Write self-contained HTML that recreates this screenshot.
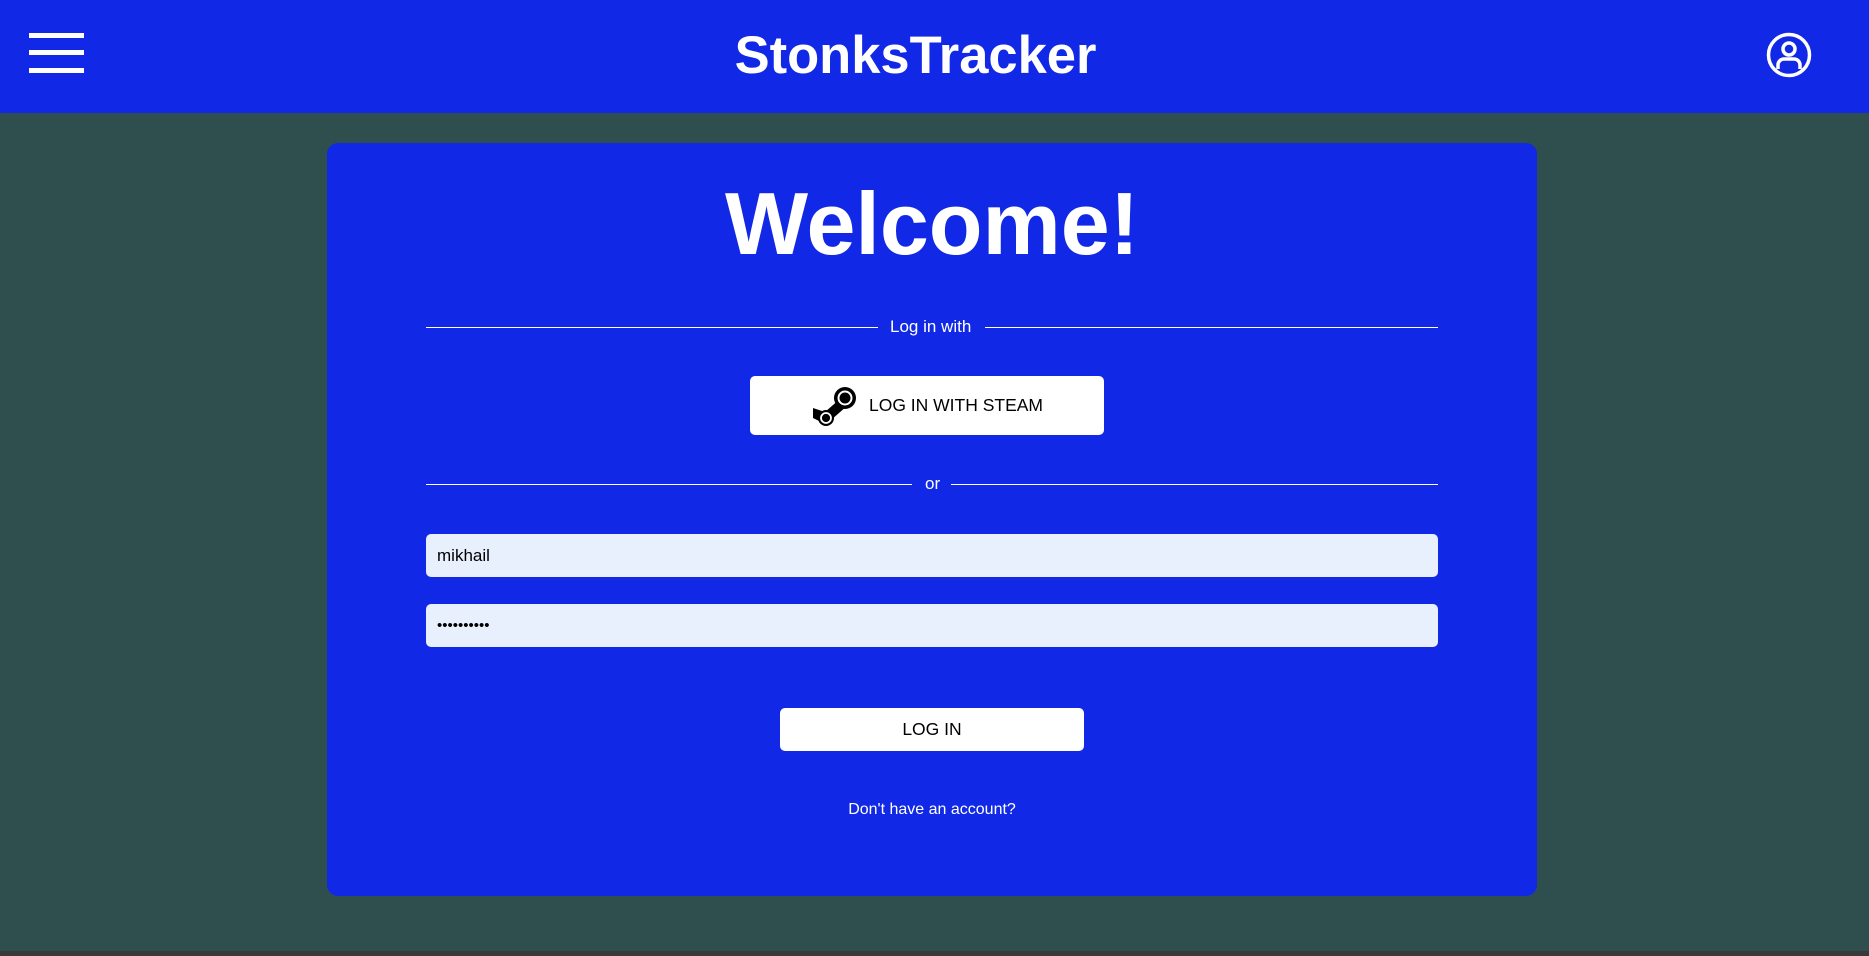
<!DOCTYPE html>
<html><head><style>
*{margin:0;padding:0;box-sizing:border-box}
body{width:1869px;height:956px;background:#2f4f4f;font-family:"Liberation Sans",Arial,sans-serif;position:relative;overflow:hidden}
.hdr{position:absolute;left:0;top:0;width:1869px;height:113px;background:#1129e6}
.bar{position:absolute;left:29px;width:55px;height:5px;background:#fff}
.title{position:absolute;left:-19px;width:1869px;top:24px;text-align:center;color:#fff;font-weight:bold;font-size:52.5px;line-height:64px}
.card{position:absolute;left:327px;top:143px;width:1210px;height:753px;background:#1129e6;border-radius:11px}
.abs{position:absolute}
.welcome{width:1210px;top:172px;text-align:center;color:#fff;font-weight:bold;font-size:88px;line-height:104px}
.line{position:absolute;height:1px;background:#fff}
.lbl{position:absolute;color:#fff;font-size:17px;line-height:20px}
.btn{position:absolute;background:#fff;border-radius:5px;color:#000;font-size:17.5px;display:flex;align-items:center;justify-content:center}
.inp{position:absolute;left:426px;width:1012px;background:#e8f0fe;border-radius:5px;font-size:17px;padding-left:11px;display:flex;align-items:center;color:#000}
</style></head><body>
<div class="hdr">
<div class="bar" style="top:33px"></div>
<div class="bar" style="top:50px"></div>
<div class="bar" style="top:68px"></div>
<div class="title">StonksTracker</div>
<svg class="abs" style="left:1765px;top:31px" width="48" height="48" viewBox="0 0 48 48" fill="none" stroke="#fff" stroke-width="3.5"><circle cx="24" cy="24" r="20.5"/><circle cx="24" cy="18" r="6"/><path d="M13 38 v-4 a6 6 0 0 1 6 -6 h10 a6 6 0 0 1 6 6 v4"/></svg>
</div>
<div class="card"></div>
<div class="abs welcome" style="left:327px">Welcome!</div>
<div class="line" style="left:426px;width:452px;top:327px"></div>
<div class="lbl" style="left:890px;top:317px">Log in with</div>
<div class="line" style="left:985px;width:453px;top:327px"></div>
<div class="btn" style="left:750px;top:376px;width:354px;height:59px">
<svg width="48" height="40" viewBox="0 0 48 40" style="margin-right:10px"><path d="M2 22 L14 26 L30 12 L36 20 L20 34 L14 38 L2 32 Z" fill="#000"/><circle cx="34" cy="12" r="11" fill="#000"/><circle cx="34" cy="12" r="6.5" fill="none" stroke="#fff" stroke-width="2"/><circle cx="15" cy="32" r="8" fill="#000"/><circle cx="15" cy="32" r="5" fill="none" stroke="#fff" stroke-width="1.8"/></svg>LOG IN WITH STEAM</div>
<div class="line" style="left:426px;width:486px;top:484px"></div>
<div class="lbl" style="left:925px;top:474px">or</div>
<div class="line" style="left:951px;width:487px;top:484px"></div>
<div class="inp" style="top:534px;height:43px">mikhail</div>
<div class="inp" style="top:604px;height:43px;font-size:15px">••••••••••</div>
<div class="btn" style="left:780px;top:708px;width:304px;height:43px">LOG IN</div>
<div class="lbl" style="left:0;width:1864px;text-align:center;top:800px;font-size:16px">Don't have an account?</div>
<div class="abs" style="left:0;top:951px;width:1869px;height:5px;background:#3a3a3a"></div>
</body></html>
